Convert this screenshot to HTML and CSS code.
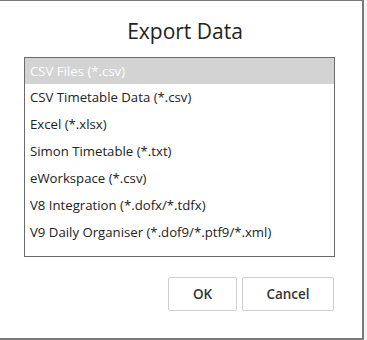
FILE: index.html
```html
<!DOCTYPE html>
<html>
<head>
<meta charset="utf-8">
<link rel="stylesheet" href="styles.css">
</head>
<body>
<div class="dialog">
  <h1 class="title">Export Data</h1>
  <ul class="list">
    <li class="item selected">CSV Files (*.csv)</li>
    <li class="item">CSV Timetable Data (*.csv)</li>
    <li class="item">Excel (*.xlsx)</li>
    <li class="item">Simon Timetable (*.txt)</li>
    <li class="item">eWorkspace (*.csv)</li>
    <li class="item">V8 Integration (*.dofx/*.tdfx)</li>
    <li class="item">V9 Daily Organiser (*.dof9/*.ptf9/*.xml)</li>
  </ul>
  <div class="buttons">
    <button class="btn ok">OK</button>
    <button class="btn cancel">Cancel</button>
  </div>
</div>
</body>
</html>
```
FILE: styles.css
```css
html, body {
  margin: 0;
  padding: 0;
  background: #f4f4f4;
  font-family: "Open Sans", "DejaVu Sans", sans-serif;
}
.dialog {
  box-sizing: border-box;
  width: 364px;
  height: 340px;
  background: #ffffff;
  border-top: 1px solid #7a7a7a;
  border-right: 2px solid #7a7a7a;
  border-bottom: 2px solid #7a7a7a;
  display: flex;
  flex-direction: column;
}
.title {
  margin: 16px 0 0 0;
  padding-left: 8px;
  font-size: 21px;
  font-weight: 400;
  line-height: 28px;
  text-align: center;
  color: #222;
}
.list {
  list-style: none;
  margin: 12px 0 0 24px;
  padding: 0;
  width: 311px;
  height: 200px;
  box-sizing: border-box;
  border: 1px solid #6b6b6b;
}
.item {
  height: 27px;
  line-height: 27px;
  padding-left: 5px;
  font-size: 13.2px;
  color: #222;
  white-space: nowrap;
}
.item.selected {
  height: 26px;
  line-height: 27px;
  background: #d3d3d3;
  color: #ffffff;
}
.buttons {
  display: flex;
  justify-content: flex-end;
  gap: 5px;
  margin-top: 20px;
  padding-right: 28px;
}
.btn {
  height: 34px;
  box-sizing: border-box;
  background: #ffffff;
  border: 1px solid #d0d0d0;
  border-radius: 2px;
  font-family: "Open Sans", "DejaVu Sans", sans-serif;
  font-size: 13.5px;
  font-weight: 600;
  color: #333;
  padding: 0;
}
.ok { width: 69px; }
.cancel { width: 92px; }
```
